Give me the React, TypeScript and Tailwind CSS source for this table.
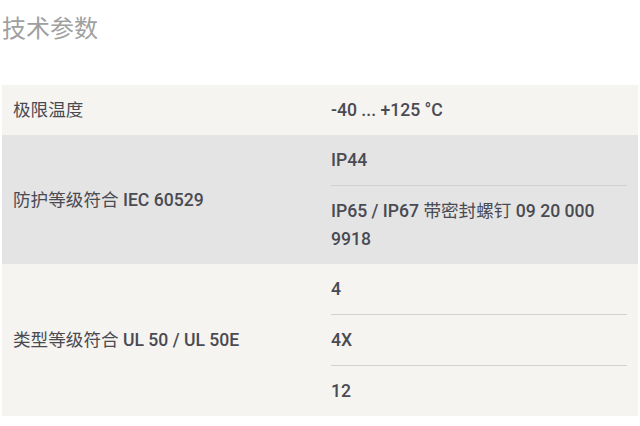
const cjk = "font-normal";

type Row = {
    label: React.ReactNode;
    values: React.ReactNode[];
    bg: string;
};

const rows: Row[] = [
    {
        label: <span className={cjk}>极限温度</span>,
        values: ["-40 ... +125 °C"],
        bg: "bg-[#f5f4f0]",
    },
    {
        label: (
            <>
                <span className={cjk}>防护等级符合</span> IEC 60529
            </>
        ),
        values: [
            "IP44",
            <>
                IP65 / IP67 <span className={cjk}>带密封螺钉</span> 09 20 000 9918
            </>,
        ],
        bg: "bg-[#e4e4e4]",
    },
    {
        label: (
            <>
                <span className={cjk}>类型等级符合</span> UL 50 / UL 50E
            </>
        ),
        values: ["4", "4X", "12"],
        bg: "bg-[#f5f4f0]",
    },
];

export default function App() {
    return (
        <div
            className="min-h-[426px] bg-white px-[2px] pt-[11px] text-[#4a4a52]"
            style={{ fontFamily: "Roboto, 'Noto Sans CJK SC', sans-serif" }}
        >
            <h2 className="text-[24px] leading-[36px] font-normal text-[#a0a0a0]">技术参数</h2>

            <div className="mt-[38px] text-[17.6px] leading-[28px] font-medium">
                {rows.map((row, i) => (
                    <div key={i} className={`grid grid-cols-2 ${row.bg}`}>
                        <div className="flex items-center px-[11px]">
                            <div>{row.label}</div>
                        </div>
                        <div className="px-[11px]">
                            {row.values.map((v, j) => (
                                <div
                                    key={j}
                                    className={`py-[11px] ${j > 0 ? "border-t border-[#d2d2d2]" : ""}`}
                                >
                                    {v}
                                </div>
                            ))}
                        </div>
                    </div>
                ))}
            </div>
        </div>
    );
}
